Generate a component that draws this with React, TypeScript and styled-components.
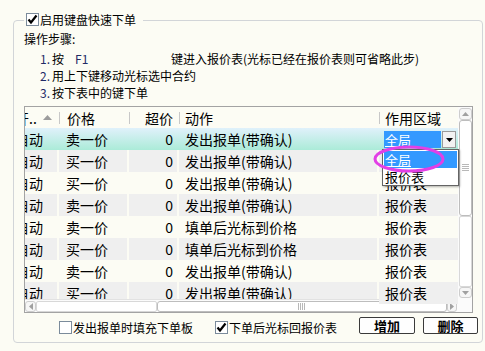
import styled, { createGlobalStyle } from 'styled-components'

const cream = '#fcfcf4'
const navy = '#1f2a66'

const GlobalStyle = createGlobalStyle`
  html, body {
    margin: 0;
    padding: 0;
    background: ${cream};
  }
  body {
    font-family: 'Noto Sans CJK SC', 'Noto Sans', sans-serif;
    font-size: 12px;
    color: #000;
  }
`

interface RowData {
  price: string
  action: string
  area: string
}

const rows: RowData[] = [
  { price: '卖一价', action: '发出报单(带确认)', area: '全局' },
  { price: '买一价', action: '发出报单(带确认)', area: '报价表' },
  { price: '买一价', action: '发出报单(带确认)', area: '报价表' },
  { price: '卖一价', action: '发出报单(带确认)', area: '报价表' },
  { price: '卖一价', action: '填单后光标到价格', area: '报价表' },
  { price: '买一价', action: '填单后光标到价格', area: '报价表' },
  { price: '卖一价', action: '发出报单(带确认)', area: '报价表' },
  { price: '买一价', action: '发出报单(带确认)', area: '报价表' },
]

const Page = styled.div`
  width: 485px;
  height: 351px;
  box-sizing: border-box;
  padding: 20px 2px 0 13px;
  background: ${cream};
  overflow: hidden;
`

const Group = styled.div`
  height: 323px;
  box-sizing: border-box;
  border: 1px solid #d2d5d8;
  border-radius: 4px;
  padding: 0 9px 0 10px;
  display: flex;
  flex-direction: column;
`

const Legend = styled.div`
  align-self: flex-start;
  display: flex;
  align-items: center;
  gap: 1px;
  height: 13px;
  line-height: 13px;
  margin: -8px 0 0 0;
  padding: 0 7px 0 2px;
  background: ${cream};
`

// ---- checkbox ----
const Box = styled.span`
  width: 13px;
  height: 13px;
  box-sizing: border-box;
  border: 1px solid #7b8b9b;
  background: #fff;
  display: inline-flex;
  align-items: center;
  justify-content: center;
  flex: none;
`

const CheckBox = ({ checked }: { checked?: boolean }) => (
  <Box>
    {checked && (
      <svg width='11' height='11' viewBox='0 0 11 11'>
        <polyline points='1.5,5.5 4,8.5 9.5,1.5' fill='none' stroke='#000' strokeWidth='2.2' />
      </svg>
    )}
  </Box>
)

const CheckLabel = styled.label`
  display: flex;
  align-items: center;
  gap: 1px;
  margin-top: 4px;
  line-height: 14px;
  white-space: nowrap;
`

// ---- steps ----
const Steps = styled.div`
  margin-top: 4px;
`

const StepsTitle = styled.div`
  line-height: 18px;
  margin-bottom: 2px;
`

const StepItem = styled.div`
  line-height: 17px;
  padding-left: 16px;
  white-space: nowrap;
`

const Num = styled.span`
  display: inline-block;
  width: 12px;
  color: ${navy};
`

const Key = styled.span`
  display: inline-block;
  width: 96px;
  margin-left: 11px;
  color: ${navy};
`

// ---- table ----
const Table = styled.div`
  margin-top: 5px;
  height: 207px;
  box-sizing: border-box;
  border: 1px solid #a3a3a3;
  display: grid;
  grid-template-columns: 433px 14px;
  grid-template-rows: 21px 171px 13px;
  background: ${cream};
  font-size: 14px;
`

const cols = '32px 68px 48px 198px 1fr'

const HeadRow = styled.div`
  grid-column: 1;
  grid-row: 1;
  display: grid;
  grid-template-columns: ${cols};
  column-gap: 2px;
  background: ${cream};
`

const HeadCell = styled.div<{ $right?: boolean; $pad?: number }>`
  position: relative;
  display: flex;
  align-items: center;
  justify-content: ${(p) => (p.$right ? 'flex-end' : 'flex-start')};
  padding: ${(p) => (p.$right ? `0 4px 0 0` : `0 0 0 ${p.$pad ?? 6}px`)};
  white-space: nowrap;
  overflow: hidden;

  &::before {
    content: '';
    position: absolute;
    left: 0;
    top: 5px;
    bottom: 4px;
    width: 1px;
    background: #c8c8c8;
  }
  &:first-child::before {
    display: none;
  }
`

const Clipped = styled.span`
  margin-left: -10px;
`

const SortArrow = styled.svg`
  margin-left: auto;
  margin-right: 5px;
  flex: none;
`

const Body = styled.div`
  grid-column: 1;
  grid-row: 2;
`

const Row = styled.div<{ $selected?: boolean }>`
  height: 22px;
  display: grid;
  grid-template-columns: ${cols};
  column-gap: 2px;
  background: ${(p) => (p.$selected ? 'linear-gradient(#e0f1fb, #abebd8)' : cream)};
`

const Cell = styled.div<{ $striped?: boolean }>`
  display: flex;
  align-items: center;
  white-space: nowrap;
  overflow: hidden;
  background: ${(p) => (p.$striped ? '#efefef' : 'transparent')};
`

const TypeCell = styled(Cell)``

const PriceCell = styled(Cell)`
  padding-left: 7px;
`

const OverCell = styled(Cell)`
  justify-content: flex-end;
  padding-right: 4px;
`

const ActionCell = styled(Cell)`
  padding-left: 6px;
`

const AreaCell = styled(Cell)`
  padding-left: 6px;
  overflow: visible;
  position: relative;
`

// ---- combo box editor ----
const Combo = styled.div`
  position: relative;
  align-self: flex-start;
  margin: 3px 0 0 -1px;
  display: flex;
  height: 17px;
  width: 72px;
  font-size: 13px;
`

const ComboText = styled.div`
  width: 56px;
  background: #3399ff;
  color: #fff;
  line-height: 17px;
  padding-left: 1px;
  text-decoration: underline;
  text-underline-offset: 1px;
`

const ComboButton = styled.div`
  margin-left: 1px;
  flex: 1;
  box-sizing: border-box;
  border: 1px solid #9a9a9a;
  background: #f2f2f2;
  display: flex;
  align-items: center;
  justify-content: center;
`

const DropList = styled.div`
  position: absolute;
  left: -2px;
  top: 18px;
  width: 77px;
  box-sizing: border-box;
  border: 1px solid #646464;
  background: #fff;
  box-shadow: 1px 1px 2px rgba(0, 0, 0, 0.3);
  padding: 1px 1px 0;
  z-index: 2;
`

const DropItem = styled.div<{ $active?: boolean }>`
  height: 17px;
  line-height: 17px;
  padding-left: 1px;
  background: ${(p) => (p.$active ? '#3399ff' : '#fff')};
  color: ${(p) => (p.$active ? '#fff' : '#000')};
  text-decoration: ${(p) => (p.$active ? 'underline' : 'none')};
  text-underline-offset: 1px;
`

const Mark = styled.svg`
  position: absolute;
  left: -10px;
  top: -5px;
  z-index: 3;
  pointer-events: none;
`

// ---- scrollbars ----
const VScroll = styled.div`
  grid-column: 2;
  grid-row: 1 / span 2;
  display: flex;
  flex-direction: column;
  padding: 1px 0 1px 1px;
  background: #fbfbfb;
`

const HScroll = styled.div`
  grid-column: 1;
  grid-row: 3;
  display: flex;
  padding: 1px 1px 0 0;
  background: #fbfbfb;
  border-top: 1px solid #e2e2e2;
`

const Corner = styled.div`
  grid-column: 2;
  grid-row: 3;
  background: #fbfbfb;
`

const SBtn = styled.div<{ $size?: number; $vertical?: boolean }>`
  flex: none;
  ${(p) => (p.$vertical ? `height: ${p.$size}px;` : `width: ${p.$size}px;`)}
  box-sizing: border-box;
  border: 1px solid #cdcdcd;
  border-radius: 3px;
  background: #f6f6f6;
  display: flex;
  align-items: center;
  justify-content: center;
`

const Thumb = styled.div<{ $size: number; $vertical?: boolean }>`
  flex: none;
  ${(p) => (p.$vertical ? `height: ${p.$size}px;` : `width: ${p.$size}px;`)}
  box-sizing: border-box;
  border: 1px solid #bdbdbd;
  border-radius: 3px;
  background: #fff;
  display: flex;
  align-items: center;
  justify-content: center;
`

const Track = styled.div<{ $size?: number; $vertical?: boolean }>`
  ${(p) => (p.$size ? (p.$vertical ? `height: ${p.$size}px;` : `width: ${p.$size}px;`) : 'flex: 1;')}
  flex-shrink: 0;
  box-sizing: border-box;
  border: 1px solid #d8d8d8;
  border-radius: 2px;
  background: #fff;
`

const Grip = ({ vertical }: { vertical?: boolean }) =>
  vertical ? (
    <svg width='7' height='8' viewBox='0 0 7 8'>
      {[0.5, 2.5, 4.5, 6.5].map((y) => (
        <line key={y} x1='0' y1={y} x2='7' y2={y} stroke='#b8b8b8' />
      ))}
    </svg>
  ) : (
    <svg width='8' height='7' viewBox='0 0 8 7'>
      {[0.5, 2.5, 4.5, 6.5].map((x) => (
        <line key={x} x1={x} y1='0' x2={x} y2='7' stroke='#b8b8b8' />
      ))}
    </svg>
  )

const Tri = ({ dir, color = '#a0a0a0' }: { dir: 'up' | 'down' | 'left' | 'right'; color?: string }) => {
  const pts = {
    up: '0,4 3.5,0 7,4',
    down: '0,0 7,0 3.5,4',
    left: '4,0 4,7 0,3.5',
    right: '0,0 0,7 4,3.5',
  }[dir]
  const vertical = dir === 'up' || dir === 'down'
  return (
    <svg width={vertical ? 7 : 4} height={vertical ? 4 : 7}>
      <polygon points={pts} fill={color} />
    </svg>
  )
}

// ---- bottom bar ----
const BottomBar = styled.div`
  height: 25px;
  display: flex;
  align-items: center;
  padding-left: 35px;
  gap: 22px;
`

const Buttons = styled.div`
  margin-left: auto;
  margin-right: 2px;
  display: flex;
  gap: 8px;
`

const Button = styled.button<{ $width: number }>`
  width: ${(p) => p.$width}px;
  height: 17px;
  padding: 0;
  box-sizing: border-box;
  border: 1px solid #3a3a3a;
  border-radius: 2px;
  background: #fefefe;
  font: inherit;
  font-size: 13px;
  font-weight: 700;
  line-height: 15px;
  color: #000;
`

export default function App() {
  return (
    <>
      <GlobalStyle />
      <Page>
        <Group>
          <Legend>
            <CheckBox checked />
            <span>启用键盘快速下单</span>
          </Legend>

          <Steps>
            <StepsTitle>操作步骤:</StepsTitle>
            <StepItem>
              <Num>1.</Num>按<Key>F1</Key>键进入报价表(光标已经在报价表则可省略此步)
            </StepItem>
            <StepItem>
              <Num>2.</Num>用上下键移动光标选中合约
            </StepItem>
            <StepItem>
              <Num>3.</Num>按下表中的键下单
            </StepItem>
          </Steps>

          <Table>
            <HeadRow>
              <HeadCell $pad={0}>
                <Clipped>开..</Clipped>
                <SortArrow width='9' height='5' viewBox='0 0 9 5'>
                  <polygon points='0,5 4.5,0 9,5' fill='#9c9c9c' />
                </SortArrow>
              </HeadCell>
              <HeadCell $pad={8}>价格</HeadCell>
              <HeadCell $right>超价</HeadCell>
              <HeadCell>动作</HeadCell>
              <HeadCell>作用区域</HeadCell>
            </HeadRow>

            <Body>
              {rows.map((r, i) => {
                const striped = i % 2 === 1
                const selected = i === 0
                return (
                  <Row key={i} $selected={selected}>
                    <TypeCell $striped={striped}>
                      <Clipped>自动</Clipped>
                    </TypeCell>
                    <PriceCell $striped={striped}>{r.price}</PriceCell>
                    <OverCell $striped={striped}>0</OverCell>
                    <ActionCell $striped={striped}>{r.action}</ActionCell>
                    <AreaCell $striped={striped}>
                      {selected ? (
                        <Combo>
                          <ComboText>全局</ComboText>
                          <ComboButton>
                            <Tri dir='down' color='#000' />
                          </ComboButton>
                          <DropList>
                            <DropItem $active>全局</DropItem>
                            <DropItem>报价表</DropItem>
                            <Mark width='72' height='28' viewBox='0 0 72 28'>
                              <ellipse cx='36' cy='14' rx='34' ry='12' fill='none' stroke='#e23fe6' strokeWidth='3' />
                            </Mark>
                          </DropList>
                        </Combo>
                      ) : (
                        r.area
                      )}
                    </AreaCell>
                  </Row>
                )
              })}
            </Body>

            <VScroll>
              <SBtn $vertical $size={12}>
                <Tri dir='up' />
              </SBtn>
              <Thumb $vertical $size={96}>
                <Grip vertical />
              </Thumb>
              <Track $vertical />
              <SBtn $vertical $size={11}>
                <Tri dir='down' />
              </SBtn>
            </VScroll>

            <HScroll>
              <SBtn $size={11}>
                <Tri dir='left' />
              </SBtn>
              <Track $size={121} />
              <Thumb $size={290}>
                <Grip />
              </Thumb>
              <SBtn $size={11} style={{ flex: 1 }}>
                <Tri dir='right' />
              </SBtn>
            </HScroll>
            <Corner />
          </Table>

          <BottomBar>
            <CheckLabel>
              <CheckBox />
              <span>发出报单时填充下单板</span>
            </CheckLabel>
            <CheckLabel>
              <CheckBox checked />
              <span>下单后光标回报价表</span>
            </CheckLabel>
            <Buttons>
              <Button $width={56}>增加</Button>
              <Button $width={55}>删除</Button>
            </Buttons>
          </BottomBar>
        </Group>
      </Page>
    </>
  )
}
